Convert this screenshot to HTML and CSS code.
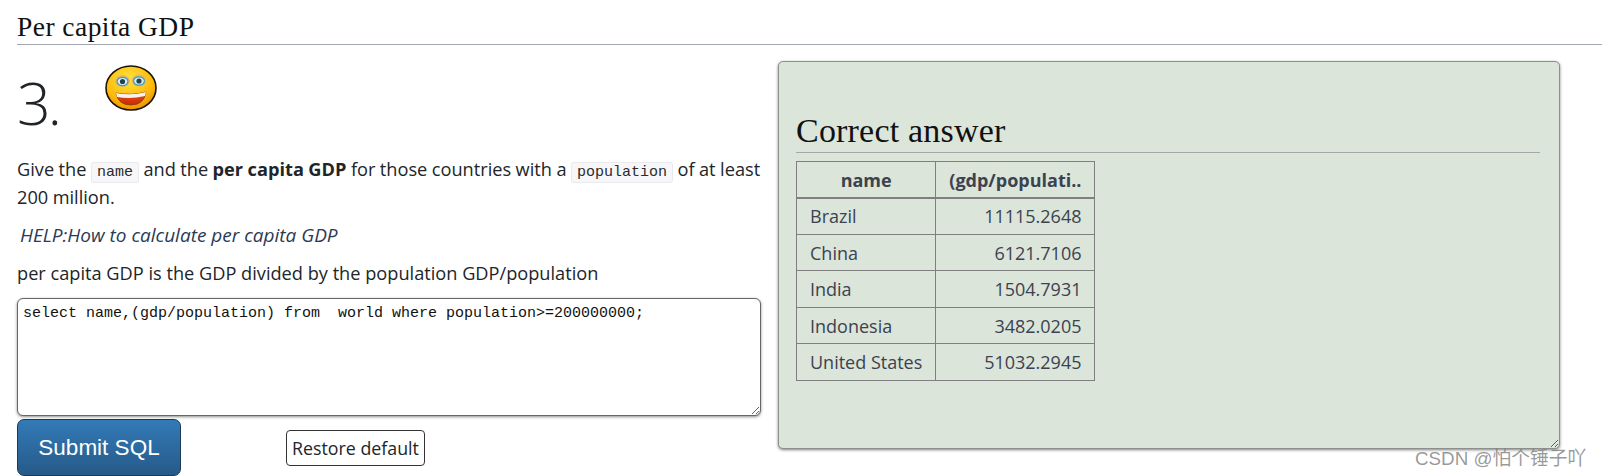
FILE: index.html
```html
<!DOCTYPE html>
<html lang="en">
<head>
<meta charset="utf-8">
<title>Per capita GDP</title>
<link rel="stylesheet" href="styles.css">
</head>
<body>
<h2 class="page-title">Per capita GDP</h2>
<div class="columns">
  <section class="question">
    <div class="number-row">
      <h1 class="number">3.</h1>
      <svg class="smiley" viewBox="0 0 52 46" width="52" height="46" aria-hidden="true">
        <defs>
          <radialGradient id="face" cx="0.45" cy="0.3" r="0.8">
            <stop offset="0" stop-color="#ffe23a"/>
            <stop offset="0.6" stop-color="#fdbb0c"/>
            <stop offset="1" stop-color="#e07f00"/>
          </radialGradient>
          <linearGradient id="mouth" x1="0" y1="0" x2="0" y2="1">
            <stop offset="0" stop-color="#e8501a"/>
            <stop offset="1" stop-color="#c92a08"/>
          </linearGradient>
        </defs>
        <ellipse cx="26" cy="23" rx="25" ry="22" fill="url(#face)" stroke="#1a1208" stroke-width="1.6"/>
        <ellipse cx="17.5" cy="16" rx="7.5" ry="6" fill="#e9b65a"/>
        <ellipse cx="34" cy="15.5" rx="7.5" ry="6" fill="#e9b65a"/>
        <ellipse cx="17.5" cy="16.5" rx="5.4" ry="4.2" fill="#dfeef0" stroke="#3aa0c0" stroke-width="1.2"/>
        <ellipse cx="34" cy="16" rx="5.4" ry="4.2" fill="#dfeef0" stroke="#3aa0c0" stroke-width="1.2"/>
        <circle cx="17.5" cy="16.5" r="2.6" fill="#20424f"/>
        <circle cx="34" cy="16" r="2.6" fill="#20424f"/>
        <path d="M11 28 Q26 31 41 27 Q39 40 26 40 Q13 40 11 28Z" fill="url(#mouth)" stroke="#8a3a05" stroke-width="0.8"/>
        <path d="M11 28 Q26 31 41 27 L40 31 Q26 34.5 12 32Z" fill="#f8f2ea"/>
      </svg>
    </div>
    <p class="text text-tight">Give the <code class="inline-code">name</code> and the <b>per capita GDP</b> for those countries with a <code class="inline-code">population</code> of at least 200 million.</p>
    <p class="help"><i>HELP:How to calculate per capita GDP</i></p>
    <p class="text text-last">per capita GDP is the GDP divided by the population GDP/population</p>
    <textarea class="sql" spellcheck="false">select name,(gdp/population) from  world where population&gt;=200000000;</textarea>
    <div class="actions">
      <button class="submit" type="button">Submit SQL</button>
      <button class="restore" type="button">Restore default</button>
    </div>
  </section>
  <section class="answer">
    <h2 class="answer-title">Correct answer</h2>
    <table class="results">
      <thead>
        <tr><th>name</th><th>(gdp/populati..</th></tr>
      </thead>
      <tbody>
        <tr><td>Brazil</td><td class="num">11115.2648</td></tr>
        <tr><td>China</td><td class="num">6121.7106</td></tr>
        <tr><td>India</td><td class="num">1504.7931</td></tr>
        <tr><td>Indonesia</td><td class="num">3482.0205</td></tr>
        <tr><td>United States</td><td class="num">51032.2945</td></tr>
      </tbody>
    </table>
  </section>
</div>
<div class="watermark">CSDN @怕个锤子吖</div>
</body>
</html>
```

FILE: styles.css
```css
html, body { margin: 0; padding: 0; height: 476px; overflow: hidden; }
body {
  position: relative;
  background: #fff;
  color: #212529;
  font-family: "Open Sans", "Noto Sans", sans-serif;
  font-size: 18.2px;
  line-height: 28px;
}
.page-title {
  margin: 0 0 0 17px;
  padding: 9px 0 0;
  height: 35px;
  border-bottom: 1px solid #a2a6b0;
  font: 400 27.5px/35px "Liberation Serif", serif;
  letter-spacing: .45px;
  color: #111;
}
.columns {
  display: flex;
  align-items: flex-start;
  padding: 16px 42px 0 17px;
  gap: 17px;
}
.question { width: 744px; flex: none; }
.number-row { display: flex; align-items: flex-start; height: 94px; }
.number {
  margin: 8px 0 0;
  font-size: 59px;
  font-weight: 300;
  line-height: 66px;
  letter-spacing: -3px;
  width: 88px;
  color: #212529;
}
.smiley { margin-top: 4px; }
.text { margin: 0 0 10px; }
.text-tight { word-spacing: -.25px; }
.text-last { margin-bottom: 11px; }
.help { margin: 0 0 10px 3px; font-size: 19px; color: #2b3a55; }
.inline-code {
  font: 15px/20px "Liberation Mono", monospace;
  padding: 1px 5px;
  background: #f7f7f9;
  border: 1px solid #e9e9ee;
  border-radius: 3px;
  color: #2b2b2b;
  word-spacing: 0;
}
.sql {
  display: block;
  width: 100%;
  height: 118px;
  box-sizing: border-box;
  margin: 0;
  padding: 5px 5px;
  border: 1px solid #666;
  border-radius: 6px;
  box-shadow: 0 1px 3px rgba(0,0,0,.45);
  font: 15px/20px "Liberation Mono", monospace;
  color: #111;
  outline: none;
}
.actions { display: flex; align-items: center; margin-top: 3px; }
.submit {
  width: 164px;
  height: 57px;
  border: 1px solid #1c3a58;
  border-radius: 7px;
  background: linear-gradient(#337ab7, #265a88);
  color: #fff;
  font: 22.5px "Liberation Sans", sans-serif;
}
.restore {
  margin-left: 105px;
  width: 139px;
  height: 36px;
  padding: 0;
  background: #fff;
  border: 1px solid #333;
  border-radius: 4px;
  color: #212529;
  font: 17.8px "Open Sans", sans-serif;
}
.answer {
  flex: none;
  width: 782px;
  height: 388px;
  box-sizing: border-box;
  padding: 0 19px 0 17px;
  background: #dbe5da;
  border: 1px solid #8c8f8c;
  border-radius: 5px;
  box-shadow: 0 1px 3px rgba(0,0,0,.5);
  overflow: auto;
  resize: both;
}
.answer-title {
  margin: 46px 0 8px;
  height: 44px;
  border-bottom: 1px solid #a2a8a8;
  font: 400 34px/46px "Liberation Serif", serif;
  letter-spacing: .2px;
  color: #111;
}
.results {
  border-collapse: collapse;
  color: #3b4250;
  font-size: 18px;
  line-height: 24px;
}
.results th, .results td {
  border: 1px solid #7f7f7f;
  padding: 5.7px 13px;
  white-space: nowrap;
}
.results th { font-weight: 700; text-align: center; border-bottom-width: 2px; padding-bottom: 5px; }
.results th:last-child { padding-right: 12px; }
.results th:first-child, .results td:first-child { width: 109px; }
.results .num { text-align: right; padding-right: 12px; }
.watermark {
  position: absolute;
  left: 1415px;
  top: 447px;
  font: 18.8px/24px "Liberation Sans", "Noto Sans CJK SC", sans-serif;
  color: rgba(120,120,120,.75);
  white-space: nowrap;
}
```
